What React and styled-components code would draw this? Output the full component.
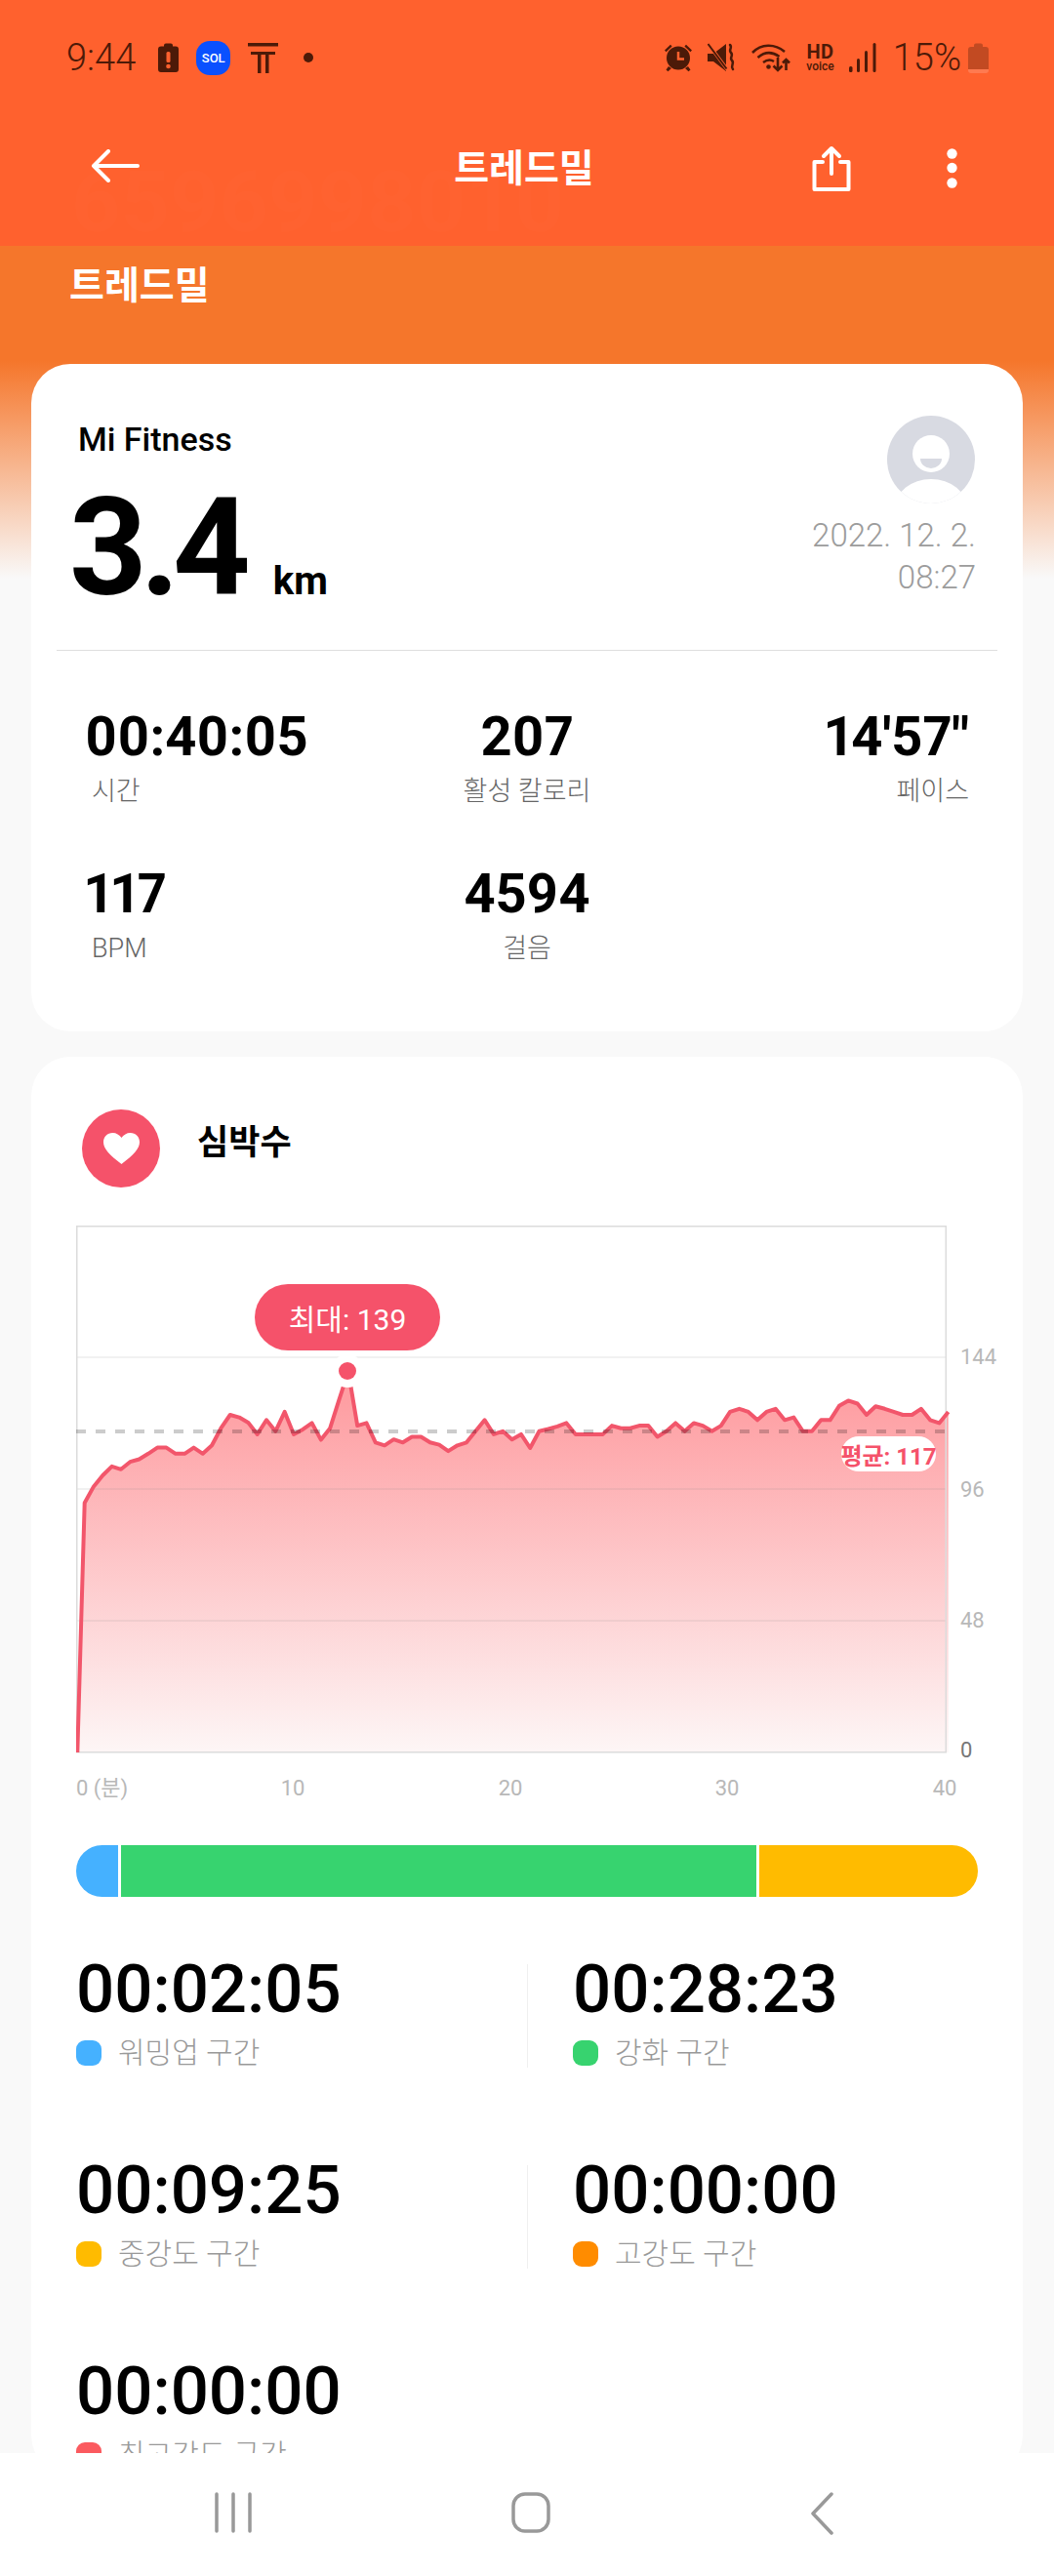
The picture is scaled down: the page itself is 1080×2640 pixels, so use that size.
import React from 'react';
import styled, { createGlobalStyle } from 'styled-components';

const GlobalStyle = createGlobalStyle`
  html, body { margin: 0; padding: 0; background: #f9f9f9; }
  * { box-sizing: border-box; }
  body { font-family: Roboto, "Noto Sans CJK KR", sans-serif; }
`;

const Page = styled.div`
  position: relative;
  width: 1080px;
  height: 2640px;
  display: flex;
  flex-direction: column;
  overflow: hidden;
  background: #f9f9f9;
`;

const Header = styled.header`
  position: relative;
  height: 252px;
  flex-shrink: 0;
  background: #ff612e;
`;

const Watermark = styled.div`
  position: absolute;
  left: 73px;
  top: 163px;
  font-size: 88px;
  line-height: 88px;
  font-weight: 700;
  color: rgba(255, 255, 255, 0.012);
`;

const StatusBar = styled.div`
  height: 118px;
  padding: 0 67px 0 68px;
  display: flex;
  align-items: center;
  justify-content: space-between;
  color: #4c1a08;
`;

const StatusGroup = styled.div`
  display: flex;
  align-items: center;
  gap: ${(p) => p.$gap || 18}px;
`;

const Clock = styled.span`
  font-size: 38px;
  font-weight: 300;
  line-height: 38px;
  margin-right: 5px;
`;

const Percent = styled.span`
  font-size: 38px;
  font-weight: 300;
  line-height: 38px;
  margin: 0 -8px 0 2px;
`;

const SolBadge = styled.div`
  width: 35px;
  height: 35px;
  border-radius: 14px;
  background: #0a50ff;
  color: #fff;
  display: flex;
  align-items: center;
  justify-content: center;
  font-size: 13px;
  font-weight: 500;
`;

const HdVoice = styled.div`
  display: flex;
  flex-direction: column;
  align-items: center;
  font-weight: 700;
  color: #4c1a08;
`;

const HdTop = styled.span`
  font-size: 20px;
  line-height: 18px;
  letter-spacing: 0.5px;
`;

const HdBottom = styled.span`
  font-size: 12px;
  line-height: 13px;
  font-weight: 500;
`;

const NotifSlot = styled.span`
  display: flex;
  margin-left: 8px;
`;

const Toolbar = styled.div`
  height: 108px;
  padding: 0 99px 0 93px;
  display: grid;
  grid-template-columns: 1fr auto 1fr;
  align-items: center;
  color: #fff;
`;

const ToolbarTitle = styled.h1`
  margin: 2px 0 0;
  font-size: 39px;
  line-height: 48px;
  font-weight: 700;
  color: #fff;
`;

const ToolbarActions = styled.div`
  display: flex;
  justify-content: flex-end;
  align-items: center;
  gap: 98px;
`;

const Scroller = styled.main`
  flex: 1;
  min-height: 0;
  overflow: hidden;
  padding-top: 21px;
  background: linear-gradient(#f5762b 0, #f5762b 118px, #f9f9f9 341px) no-repeat;
`;

const HeroTitle = styled.div`
  margin: 0 0 60px 71px;
  font-size: 39px;
  line-height: 40px;
  font-weight: 700;
  color: #fff;
`;

const Card = styled.section`
  margin: 0 32px ${(p) => p.$gap || 0}px;
  background: #fff;
  border-radius: 40px;
`;

const SummaryRow = styled.div`
  height: 293px;
  padding: 0 48px;
  display: flex;
  justify-content: space-between;
`;

const Brand = styled.div`
  margin-top: 57px;
  font-size: 34px;
  line-height: 40px;
  font-weight: 500;
  color: #000;
`;

const Distance = styled.div`
  margin: 22px 0 0 -9px;
  display: flex;
  align-items: baseline;
  color: #000;
`;

const DistanceValue = styled.span`
  font-size: 139px;
  line-height: 139px;
  font-weight: 700;
  letter-spacing: -7px;
`;

const DistanceUnit = styled.span`
  margin-left: 30px;
  font-size: 40px;
  font-weight: 700;
`;

const SummaryRight = styled.div`
  display: flex;
  flex-direction: column;
  align-items: flex-end;
  padding-top: 52px;
`;

const DateText = styled.div`
  margin-top: 10px;
  font-size: 33px;
  line-height: 43px;
  font-weight: 300;
  text-align: right;
  color: #9c9c9c;
`;

const Divider = styled.hr`
  margin: 0 26px;
  border: 0;
  height: 1px;
  background: #dedede;
`;

const StatsGrid = styled.div`
  padding: 55px 55px 0;
  height: 390px;
  display: grid;
  grid-template-columns: repeat(3, 1fr);
  grid-auto-rows: 107px;
  row-gap: 54px;
`;

const Stat = styled.div`
  text-align: ${(p) => p.$align || 'left'};
`;

const StatValue = styled.div`
  font-size: 56px;
  line-height: 66px;
  font-weight: 700;
  font-variant-numeric: proportional-nums;
  color: #000;
`;

const StatLabel = styled.div`
  margin-top: 5px;
  padding-left: ${(p) => (p.$inset ? 7 : 0)}px;
  font-size: 27px;
  line-height: 36px;
  font-weight: 300;
  color: #666;
`;

const HeartHeader = styled.div`
  padding: 54px 0 0 52px;
  display: flex;
  align-items: center;
  gap: 38px;
`;

const HeartBadge = styled.div`
  width: 80px;
  height: 80px;
  border-radius: 50%;
  background: #f5526a;
  display: flex;
  align-items: center;
  justify-content: center;
`;

const SectionTitle = styled.h2`
  margin: 0 0 10px;
  font-size: 35px;
  line-height: 44px;
  font-weight: 700;
  color: #000;
`;

const ChartWrap = styled.div`
  position: relative;
  margin: 39px 0 0 46px;
  width: 950px;
  height: 595px;
`;

const ChartSvg = styled.svg`
  display: block;
`;

const AxisText = styled.text`
  font-family: Roboto, "Noto Sans CJK KR", sans-serif;
  font-size: 22px;
  fill: ${(p) => p.$color || '#b8b8b8'};
`;

const MaxPill = styled.div`
  position: absolute;
  left: 183px;
  top: 60px;
  width: 190px;
  height: 68px;
  border-radius: 34px;
  background: #f5526a;
  color: #fff;
  display: flex;
  align-items: center;
  justify-content: center;
  font-size: 30px;
`;

const AvgPill = styled.div`
  position: absolute;
  left: 784px;
  top: 216px;
  width: 97px;
  height: 36px;
  border-radius: 18px;
  background: #fff;
  color: #f5526a;
  display: flex;
  align-items: center;
  justify-content: center;
  font-size: 24px;
  font-weight: 700;
  white-space: nowrap;
`;

const ZoneBar = styled.div`
  margin: 40px 46px 0;
  height: 53px;
  border-radius: 27px;
  overflow: hidden;
  display: flex;
  gap: 3px;
`;

const ZoneSegment = styled.div`
  width: ${(p) => p.$width}px;
  flex-grow: ${(p) => (p.$grow ? 1 : 0)};
  background: ${(p) => p.$color};
`;

const ZoneGrid = styled.div`
  margin: 55px 0 0 46px;
  display: grid;
  grid-template-columns: 462px 1fr;
  row-gap: 81px;
`;

const ZoneCell = styled.div`
  position: relative;
  padding-left: ${(p) => (p.$second ? 47 : 0)}px;

  ${(p) => p.$second && `
    &::before {
      content: '';
      position: absolute;
      left: 0;
      top: 14px;
      bottom: 5px;
      width: 1px;
      background: #f0f0f0;
    }
  `}
`;

const ZoneTime = styled.div`
  font-size: 69px;
  line-height: 80px;
  font-weight: 500;
  color: #000;
`;

const ZoneLabel = styled.div`
  margin-top: 5px;
  display: flex;
  align-items: center;
  gap: 17px;
  font-size: 30px;
  line-height: 40px;
  font-weight: 300;
  color: #999;
`;

const ZoneDot = styled.span`
  width: 26px;
  height: 26px;
  border-radius: 9px;
  background: ${(p) => p.$color};
`;

const NavBar = styled.nav`
  height: 126px;
  flex-shrink: 0;
  background: #fff;
  padding: 40px 226px 0 220px;
  display: flex;
  justify-content: space-between;
  align-items: flex-start;
`;

// heart rate trace, read off the plot (px / 2.613 for the y stretch)
const TRACE = [
  782, 738, 708, 684, 692, 672, 665, 650, 634, 634, 650, 650, 634, 650, 628, 582, 546, 553, 567, 598,
  560, 590, 538, 598, 585, 568, 613, 582, 505, 430, 575, 568, 620, 628, 612, 620, 605, 605, 620, 626,
  643, 628, 620, 590, 560, 598, 590, 612, 598, 635, 590, 584, 577, 568,
  598, 598, 598, 598, 575, 582, 582, 575, 575, 605, 590, 568, 590, 568, 575, 590, 575, 538, 530, 538,
  560, 538, 530, 560, 553, 590, 590, 560, 560, 522, 508, 516, 546, 523, 530, 538, 546, 546, 530, 560,
  568, 538,
];

const PLOT_W = 892;
const PLOT_H = 540;
const tracePoints = TRACE.map((y, i) => `${(8.7 + i * 9.316).toFixed(1)},${(y / 2.613 - 15).toFixed(1)}`);
const linePath = `M1.3,${PLOT_H} L${tracePoints.join(' L')}`;
const areaPath = `${linePath} L${(8.7 + 95 * 9.316).toFixed(1)},${PLOT_H} Z`;

const BackIcon = () => (
  <svg width="50" height="34" viewBox="0 0 50 34" fill="none" stroke="#fff" strokeWidth="4" strokeLinecap="round" strokeLinejoin="round">
    <path d="M48 17H3M18 2 3 17l15 15" />
  </svg>
);

const ShareIcon = () => (
  <svg width="40" height="47" viewBox="0 0 40 47" fill="none" stroke="#fff" strokeWidth="4" strokeLinecap="round" strokeLinejoin="round">
    <path d="M11 17H2.5v28h35V17H29M20 29V3M12 11l8-8 8 8" />
  </svg>
);

const MoreIcon = () => (
  <svg width="11" height="41" viewBox="0 0 11 41" fill="#fff">
    <circle cx="5.5" cy="5.5" r="5.2" />
    <circle cx="5.5" cy="20" r="5.2" />
    <circle cx="5.5" cy="35.5" r="5.2" />
  </svg>
);

const BatteryAlertIcon = () => (
  <svg width="21" height="30" viewBox="0 0 21 30">
    <path fill="currentColor" d="M6 3.5V2.5a2 2 0 0 1 2-2h5a2 2 0 0 1 2 2v1h3a3 3 0 0 1 3 3V27a3 3 0 0 1-3 3H3a3 3 0 0 1-3-3V6.500a3 3 0 0 1 3-3z" />
    <rect x="8.500" y="9" width="4" height="11" rx="1.500" fill="#ff612e" />
    <circle cx="10.500" cy="24" r="2.300" fill="#ff612e" />
  </svg>
);

const CarrierIcon = () => (
  <svg width="31" height="31" viewBox="0 0 31 31" fill="currentColor">
    <rect x="0" y="0" width="31" height="3.500" />
    <rect x="3" y="9" width="25" height="3" />
    <rect x="10" y="9" width="3.500" height="22" />
    <rect x="18" y="9" width="3.500" height="22" />
  </svg>
);

const NotifDot = () => (
  <svg width="10" height="10" viewBox="0 0 10 10" fill="currentColor">
    <circle cx="5" cy="5" r="5" />
  </svg>
);

const AlarmIcon = () => (
  <svg width="30" height="30" viewBox="0 0 30 30">
    <path fill="currentColor" d="M1 7.500 7 1.800l1.600 1.800-6 5.700zM29 7.500 23 1.800l-1.600 1.800 6 5.700zM5 24l-2.500 3.500 2 1.800L8 26zM25 24l2.500 3.500-2 1.800L22 26z" />
    <circle cx="15" cy="15.500" r="12" fill="currentColor" />
    <path d="M15 9v7.500h6" fill="none" stroke="#ff612e" strokeWidth="2.500" />
  </svg>
);

const MuteIcon = () => (
  <svg width="30" height="30" viewBox="0 0 30 30">
    <path fill="currentColor" d="M0 11h6L19 1v28L6 19H0z" />
    <path d="M1 1.500 20 27" stroke="#ff612e" strokeWidth="3.500" />
    <path d="M0.500 1 19.500 26.500" stroke="currentColor" strokeWidth="2" />
    <path d="M23 2c3 3-2 5 1 8s-2 5 1 8-2 5 1 9" fill="none" stroke="currentColor" strokeWidth="2.500" strokeLinecap="round" />
  </svg>
);

const WifiIcon = () => (
  <svg width="41" height="30" viewBox="0 0 41 30" fill="none" stroke="currentColor" strokeWidth="2.600">
    <path d="M1 10C10 .5 24 .5 34 9" />
    <path d="M6.500 15c7-6 15-6 22-1" />
    <path d="M12 20c4-3 8-3 11-1" />
    <circle cx="17.500" cy="24.500" r="2.300" fill="currentColor" stroke="none" />
    <path d="M27 15v13M22.500 23.500 27 28l4.500-4.500M35.500 28V17M32 20.500l3.500-3.500 3.500 3.500" />
  </svg>
);

const SignalIcon = () => (
  <svg width="28" height="30" viewBox="0 0 28 30" fill="currentColor">
    <rect x="0" y="24" width="3.500" height="6" rx="1.500" />
    <rect x="8" y="16" width="3" height="14" rx="1.500" />
    <rect x="16" y="8" width="3" height="22" rx="1.500" />
    <rect x="24.500" y="0" width="3" height="30" rx="1.500" />
  </svg>
);

const BatteryIcon = () => (
  <svg width="21" height="31" viewBox="0 0 21 31">
    <path fill="#c24a22" d="M6 4V2.500a2 2 0 0 1 2-2h5a2 2 0 0 1 2 2V4h3a3 3 0 0 1 3 3v20H0V7a3 3 0 0 1 3-3z" />
    <path fill="#ff7a50" d="M0 27h21v1a3 3 0 0 1-3 3H3a3 3 0 0 1-3-3z" />
  </svg>
);

const Avatar = () => (
  <svg width="92" height="92" viewBox="0 0 92 92">
    <defs>
      <clipPath id="avatarClip">
        <circle cx="46" cy="46" r="45" />
      </clipPath>
    </defs>
    <circle cx="46" cy="46" r="45" fill="#d8dae2" />
    <g clipPath="url(#avatarClip)">
      <circle cx="46" cy="40" r="19" fill="#fff" />
      <path d="M35 45h22a11 10 0 0 1-22 0z" fill="#d8dae2" />
      <ellipse cx="46" cy="96" rx="37" ry="30" fill="#fff" />
    </g>
  </svg>
);

const HeartIcon = () => (
  <svg width="37" height="32" viewBox="0 0 37 32" fill="#fff">
    <path d="M18.500 32C6 22.500 0 16 0 9.500 0 4 4 0 9.500 0c3.500 0 7 2 9 5 2-3 5.500-5 9-5C33 0 37 4 37 9.500 37 16 31 22.500 18.500 32z" />
  </svg>
);

const RecentsIcon = () => (
  <svg width="38" height="42" viewBox="0 0 38 42" fill="none" stroke="#999" strokeWidth="3.500" strokeLinecap="round">
    <path d="M2 2v38M19 2v38M36 2v38" />
  </svg>
);

const HomeIcon = () => (
  <svg width="40" height="42" viewBox="0 0 40 42" fill="none" stroke="#999" strokeWidth="3.500">
    <rect x="2" y="2" width="36" height="38" rx="12" />
  </svg>
);

const NavBackIcon = () => (
  <svg width="24" height="44" viewBox="0 0 24 44" fill="none" stroke="#999" strokeWidth="3.500" strokeLinecap="round" strokeLinejoin="round">
    <path d="M22 2 3 22l19 20" />
  </svg>
);

const HeartChart = () => (
  <ChartWrap>
    <ChartSvg width="950" height="595" viewBox="0 0 950 595">
      <defs>
        <linearGradient id="hrFill" x1="0" y1="180" x2="0" y2="540" gradientUnits="userSpaceOnUse">
          <stop offset="0" stopColor="#fe9fa3" />
          <stop offset="1" stopColor="#fdf6f6" />
        </linearGradient>
      </defs>
      <path d={areaPath} fill="url(#hrFill)" />
      {[135, 270, 405].map((y) => (
        <line key={y} x1="0" x2={PLOT_W} y1={y} y2={y} stroke="#8a8a8a" strokeOpacity="0.16" strokeWidth="1.500" />
      ))}
      <rect x="0.750" y="0.750" width={PLOT_W - 1.5} height={PLOT_H - 1} fill="none" stroke="#dcdcdc" strokeWidth="1.500" />
      <path d={linePath} fill="none" stroke="#f2566b" strokeWidth="4" strokeLinejoin="round" />
      <line x1="0" x2={PLOT_W} y1="211" y2="211" stroke="#000" strokeOpacity="0.2" strokeWidth="4" strokeDasharray="10 10" />
      <circle cx="278" cy="149" r="17" fill="#fff" />
      <circle cx="278" cy="149" r="9" fill="#f5526a" />
      <AxisText x="906" y="142">144</AxisText>
      <AxisText x="906" y="278">96</AxisText>
      <AxisText x="906" y="412">48</AxisText>
      <AxisText x="906" y="545" $color="#777">0</AxisText>
      <AxisText x="0" y="584">0 (분)</AxisText>
      <AxisText x="222" y="584" textAnchor="middle">10</AxisText>
      <AxisText x="445" y="584" textAnchor="middle">20</AxisText>
      <AxisText x="667" y="584" textAnchor="middle">30</AxisText>
      <AxisText x="890" y="584" textAnchor="middle">40</AxisText>
    </ChartSvg>
    <MaxPill>최대: 139</MaxPill>
    <AvgPill>평균: 117</AvgPill>
  </ChartWrap>
);

const ZONES = [
  { time: '00:02:05', label: '워밍업 구간', color: '#45b1ff' },
  { time: '00:28:23', label: '강화 구간', color: '#37d36f', second: true },
  { time: '00:09:25', label: '중강도 구간', color: '#ffbb00' },
  { time: '00:00:00', label: '고강도 구간', color: '#ff8c00', second: true },
  { time: '00:00:00', label: '최고강도 구간', color: '#fb5a5f' },
];

export default function App() {
  return (
    <Page>
      <GlobalStyle />
      <Header>
        <Watermark>6596998010</Watermark>
        <StatusBar>
          <StatusGroup>
            <Clock>9:44</Clock>
            <BatteryAlertIcon />
            <SolBadge>SOL</SolBadge>
            <CarrierIcon />
            <NotifSlot>
              <NotifDot />
            </NotifSlot>
          </StatusGroup>
          <StatusGroup $gap={15}>
            <AlarmIcon />
            <MuteIcon />
            <WifiIcon />
            <HdVoice>
              <HdTop>HD</HdTop>
              <HdBottom>voice</HdBottom>
            </HdVoice>
            <SignalIcon />
            <Percent>15%</Percent>
            <BatteryIcon />
          </StatusGroup>
        </StatusBar>
        <Toolbar>
          <div><BackIcon /></div>
          <ToolbarTitle>트레드밀</ToolbarTitle>
          <ToolbarActions>
            <ShareIcon />
            <MoreIcon />
          </ToolbarActions>
        </Toolbar>
      </Header>

      <Scroller>
        <HeroTitle>트레드밀</HeroTitle>

        <Card $gap={26}>
          <SummaryRow>
            <div>
              <Brand>Mi Fitness</Brand>
              <Distance>
                <DistanceValue>3.4</DistanceValue>
                <DistanceUnit>km</DistanceUnit>
              </Distance>
            </div>
            <SummaryRight>
              <Avatar />
              <DateText>
                2022. 12. 2.
                <br />
                08:27
              </DateText>
            </SummaryRight>
          </SummaryRow>
          <Divider />
          <StatsGrid>
            <Stat>
              <StatValue>00:40:05</StatValue>
              <StatLabel $inset>시간</StatLabel>
            </Stat>
            <Stat $align="center">
              <StatValue>207</StatValue>
              <StatLabel>활성 칼로리</StatLabel>
            </Stat>
            <Stat $align="right">
              <StatValue>14'57"</StatValue>
              <StatLabel>페이스</StatLabel>
            </Stat>
            <Stat>
              <StatValue>117</StatValue>
              <StatLabel $inset>BPM</StatLabel>
            </Stat>
            <Stat $align="center">
              <StatValue>4594</StatValue>
              <StatLabel>걸음</StatLabel>
            </Stat>
          </StatsGrid>
        </Card>

        <Card>
          <HeartHeader>
            <HeartBadge>
              <HeartIcon />
            </HeartBadge>
            <SectionTitle>심박수</SectionTitle>
          </HeartHeader>
          <HeartChart />
          <ZoneBar>
            <ZoneSegment $width={43} $color="#45b1ff" />
            <ZoneSegment $width={651} $color="#37d36f" />
            <ZoneSegment $grow $color="#ffbb00" />
          </ZoneBar>
          <ZoneGrid>
            {ZONES.map((z) => (
              <ZoneCell key={z.label} $second={z.second}>
                <ZoneTime>{z.time}</ZoneTime>
                <ZoneLabel>
                  <ZoneDot $color={z.color} />
                  {z.label}
                </ZoneLabel>
              </ZoneCell>
            ))}
          </ZoneGrid>
        </Card>
      </Scroller>

      <NavBar>
        <RecentsIcon />
        <HomeIcon />
        <NavBackIcon />
      </NavBar>
    </Page>
  );
}
